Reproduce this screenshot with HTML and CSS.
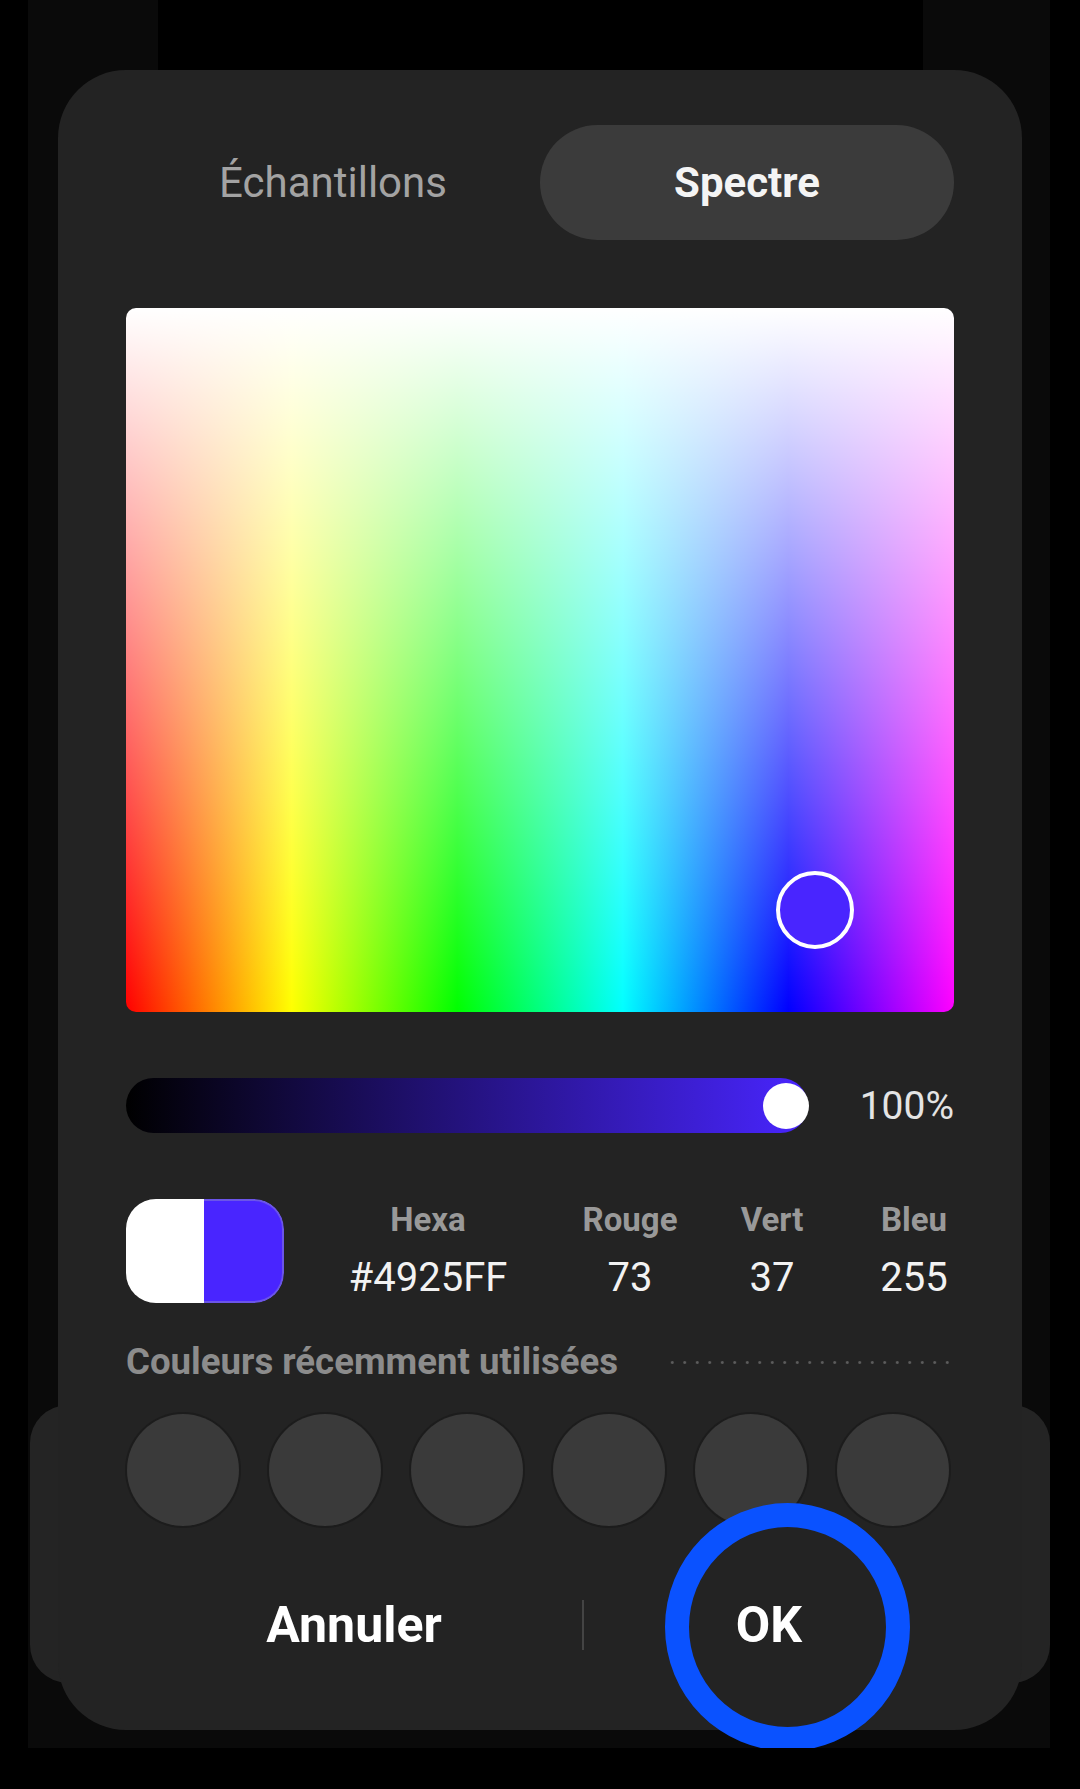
FILE: index.html
```html
<!DOCTYPE html>
<html lang="fr">
<head>
    <meta charset="UTF-8">
    <meta name="viewport" content="width=device-width, initial-scale=1.0">
    <title>Couleur</title>
    <link rel="stylesheet" href="styles.css">
</head>
<body>
    <div class="backdrop">
        <div class="notch"></div>
        <div class="sheet"></div>

        <div class="dialog">
            <div class="tabs">
                <div class="tab">Échantillons</div>
                <div class="tab active">Spectre</div>
            </div>

            <div class="spectrum">
                <div class="picker"></div>
            </div>

            <div class="slider-row">
                <div class="slider"><div class="thumb"></div></div>
                <div class="percent">100%</div>
            </div>

            <div class="values-row">
                <div class="swatch">
                    <span class="old"></span>
                    <span class="new"></span>
                </div>
                <div class="values">
                    <div class="label">Hexa</div>
                    <div class="label">Rouge</div>
                    <div class="label">Vert</div>
                    <div class="label">Bleu</div>
                    <div class="value">#4925FF</div>
                    <div class="value">73</div>
                    <div class="value">37</div>
                    <div class="value">255</div>
                </div>
            </div>

            <div class="recent-head">
                <span>Couleurs récemment utilisées</span>
                <span class="dots"></span>
            </div>
            <div class="recent">
                <span class="dot-color"></span>
                <span class="dot-color"></span>
                <span class="dot-color"></span>
                <span class="dot-color"></span>
                <span class="dot-color"></span>
                <span class="dot-color"></span>
            </div>

            <div class="actions">
                <button class="btn cancel">Annuler</button>
                <span class="divider"></span>
                <button class="btn ok">OK</button>
            </div>
        </div>

        <div class="ring"></div>
    </div>
</body>
</html>
```

FILE: styles.css
```css
body {
    margin: 0;
    background: #000;
    font-family: Roboto, "Noto Sans", Arial, sans-serif;
    color: #f2f2f2;
}
.backdrop {
    position: relative;
    margin-left: 28px;
    width: 1022px;
    height: 1748px;
    padding-top: 70px;
    box-sizing: border-box;
    background: #0a0a0a;
}
.notch {
    position: absolute;
    left: 130px;
    top: 0;
    width: 765px;
    height: 70px;
    background: #000;
}
.sheet {
    position: absolute;
    left: 2px;
    top: 1405px;
    width: 1020px;
    height: 278px;
    border-radius: 38px;
    background: #242424;
}
.dialog {
    position: relative;
    z-index: 1;
    margin-left: 30px;
    width: 964px;
    height: 1660px;
    padding: 55px 68px 0;
    box-sizing: border-box;
    border-radius: 68px;
    background: #232323;
}

/* onglets */
.tabs {
    display: grid;
    grid-template-columns: 1fr 1fr;
    height: 115px;
}
.tab {
    display: flex;
    align-items: center;
    justify-content: center;
    font-size: 42px;
    color: #a3a3a3;
    border-radius: 58px;
}
.tab.active {
    background: #3b3b3b;
    color: #f4f4f4;
    font-weight: bold;
}

/* spectre */
.spectrum {
    position: relative;
    margin-top: 68px;
    height: 704px;
    border-radius: 10px;
    background:
        linear-gradient(to bottom, #fff, rgba(255, 255, 255, 0)),
        linear-gradient(to right, #f00 0%, #ff0 20%, #0f0 40%, #0ff 60%, #00f 80%, #f0f 100%);
}
.picker {
    position: absolute;
    left: 650px;
    top: 563px;
    width: 78px;
    height: 78px;
    box-sizing: border-box;
    border: 4px solid #fff;
    border-radius: 50%;
    background: #4925ff;
}

/* luminosité */
.slider-row {
    display: flex;
    align-items: center;
    margin-top: 66px;
}
.slider {
    display: flex;
    align-items: center;
    justify-content: flex-end;
    width: 682px;
    height: 55px;
    border-radius: 28px;
    background: linear-gradient(to right, #000, #4925ff);
}
.thumb {
    width: 46px;
    height: 46px;
    margin-right: -1px;
    border-radius: 50%;
    background: #fff;
}
.percent {
    flex: 1;
    text-align: right;
    font-size: 39px;
    color: #e4e4e4;
}

/* valeurs */
.values-row {
    display: flex;
    align-items: center;
    margin-top: 66px;
}
.swatch {
    display: flex;
    flex-shrink: 0;
    width: 158px;
    height: 104px;
    border-radius: 30px;
    overflow: hidden;
}
.swatch .old {
    flex: 1;
    background: #fff;
}
.swatch .new {
    flex: 1;
    background: #4925ff;
    border: 2px solid #6b55e8;
    border-left: none;
    border-radius: 0 30px 30px 0;
}
.values {
    display: grid;
    flex-shrink: 0;
    grid-template-columns: 220px 100px 100px 100px;
    column-gap: 42px;
    row-gap: 14px;
    margin-left: 34px;
    text-align: center;
}
.label {
    font-size: 33px;
    line-height: 40px;
    font-weight: bold;
    color: #999;
}
.value {
    font-size: 40px;
    line-height: 48px;
    color: #f2f2f2;
}

/* couleurs récentes */
.recent-head {
    display: flex;
    align-items: center;
    margin-top: 39px;
    font-size: 36.6px;
    line-height: 40px;
    font-weight: bold;
    color: #8c8c8c;
}
.dots {
    flex: 1;
    height: 3px;
    margin-left: 48px;
    background: radial-gradient(circle, #5c5c5c 1.2px, transparent 1.6px) 0 0 / 12.5px 3px repeat-x;
}
.recent {
    display: flex;
    gap: 30px;
    margin-top: 32px;
    padding-left: 1px;
}
.dot-color {
    width: 112px;
    height: 112px;
    border-radius: 50%;
    background: #3a3a3a;
    box-shadow: 0 0 0 2px #1c1c1c;
}

/* boutons */
.actions {
    display: flex;
    align-items: center;
    height: 100px;
    margin-top: 49px;
}
.btn {
    background: none;
    border: none;
    padding: 0;
    font-family: inherit;
    font-size: 50px;
    font-weight: bold;
    color: #fff;
}
.cancel {
    width: 456px;
}
.divider {
    width: 2px;
    height: 50px;
    background: #444;
}
.ok {
    flex: 1;
}

/* annotation */
.ring {
    position: absolute;
    z-index: 2;
    left: 637px;
    top: 1503px;
    width: 245px;
    height: 248px;
    box-sizing: border-box;
    border: 24px solid #0a52ff;
    border-radius: 50%;
}
```
